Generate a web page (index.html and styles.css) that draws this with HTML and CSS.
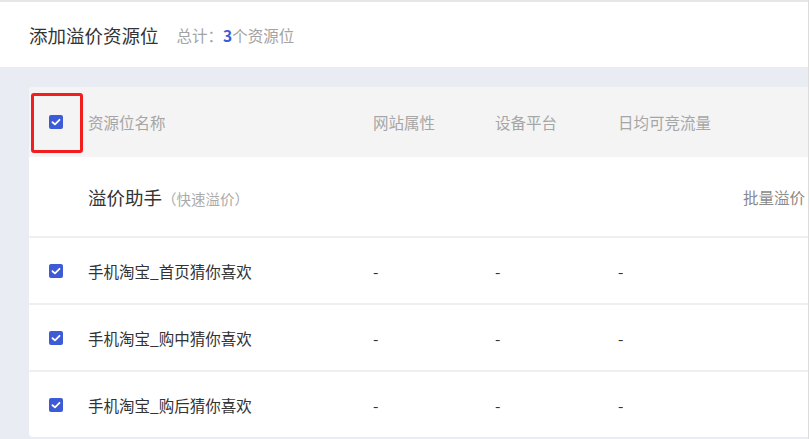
FILE: index.html
```html
<!DOCTYPE html>
<html lang="zh-CN">
<head>
  <meta charset="UTF-8">
  <meta name="viewport" content="width=device-width, initial-scale=1.0">
  <title>添加溢价资源位</title>
  <link rel="stylesheet" href="styles.css">
</head>
<body>
<div class="page">
  <div class="top">
    <h1 class="title">添加溢价资源位</h1>
    <span class="total">总计：<b>3</b>个资源位</span>
  </div>

  <div class="main">
    <div class="card">
      <div class="row head">
        <div class="cell-check">
          <span class="checkbox"><svg viewBox="0 0 14 14"><polyline points="3.5,7.2 6,9.4 10.5,4.8"/></svg></span>
          <span class="mark"></span>
        </div>
        <div>资源位名称</div>
        <div>网站属性</div>
        <div>设备平台</div>
        <div>日均可竞流量</div>
      </div>

      <div class="helper">
        <div></div>
        <div class="helper-name">溢价助手<span class="hint">（快速溢价）</span></div>
        <div class="batch">批量溢价</div>
      </div>

      <div class="row item">
        <div class="cell-check"><span class="checkbox"><svg viewBox="0 0 14 14"><polyline points="3.5,7.2 6,9.4 10.5,4.8"/></svg></span></div>
        <div>手机淘宝_首页猜你喜欢</div>
        <div>-</div>
        <div>-</div>
        <div>-</div>
      </div>
      <div class="row item">
        <div class="cell-check"><span class="checkbox"><svg viewBox="0 0 14 14"><polyline points="3.5,7.2 6,9.4 10.5,4.8"/></svg></span></div>
        <div>手机淘宝_购中猜你喜欢</div>
        <div>-</div>
        <div>-</div>
        <div>-</div>
      </div>
      <div class="row item">
        <div class="cell-check"><span class="checkbox"><svg viewBox="0 0 14 14"><polyline points="3.5,7.2 6,9.4 10.5,4.8"/></svg></span></div>
        <div>手机淘宝_购后猜你喜欢</div>
        <div>-</div>
        <div>-</div>
        <div>-</div>
      </div>
    </div>
  </div>
</div>
</body>
</html>
```

FILE: styles.css
```css
body {
  margin: 0;
  background: #fff;
  font-family: "Noto Sans CJK SC", "Noto Sans", sans-serif;
}

.page {
  width: 808px;
  height: 439px;
  overflow: hidden;
  background: #e9ecf3;
  border-right: 1px solid #dcdcdc;
}

.top {
  height: 65px;
  border-top: 2px solid #e6e6e6;
  background: #fff;
  display: flex;
  align-items: center;
  padding-left: 29px;
}

.title {
  margin: 0;
  font-size: 18.5px;
  font-weight: normal;
  color: #333;
}

.total {
  margin-left: 18px;
  font-size: 15.5px;
  color: #a3a3a3;
}

.total b {
  color: #3d5bd6;
  font-weight: bold;
}

.main {
  padding: 20px 0 0 29px;
}

.card {
  width: 840px;
  background: #fff;
  border-radius: 4px;
  overflow: hidden;
}

.row {
  display: grid;
  grid-template-columns: 59px 285px 122px 123px 1fr;
  align-items: center;
  font-size: 15.5px;
}

.head {
  height: 70px;
  background: #f4f4f4;
  color: #a6a6a6;
}

.item {
  height: 65px;
  border-top: 2px solid #efefef;
  color: #333;
}

.item:first-of-type {
  margin-top: -1px;
}

.cell-check {
  position: relative;
  height: 100%;
  display: flex;
  align-items: center;
  padding-left: 20px;
}

.checkbox {
  width: 14px;
  height: 14px;
  border-radius: 2px;
  background: #3d5bd6;
  display: flex;
}

.checkbox svg {
  width: 14px;
  height: 14px;
  fill: none;
  stroke: #fff;
  stroke-width: 1.8;
  stroke-linecap: round;
  stroke-linejoin: round;
}

/* red annotation box around the select-all checkbox */
.mark {
  position: absolute;
  left: 2px;
  top: 6px;
  width: 46px;
  height: 54px;
  border: 3px solid #f21d1d;
  border-radius: 3px;
}

.helper {
  height: 79px;
  display: grid;
  grid-template-columns: 59px 655px auto;
  align-items: center;
}

.helper-name {
  font-size: 18.5px;
  color: #333;
}

.hint {
  font-size: 14.5px;
  color: #aaa;
}

.batch {
  font-size: 15.5px;
  color: #8a8a8a;
}
```
